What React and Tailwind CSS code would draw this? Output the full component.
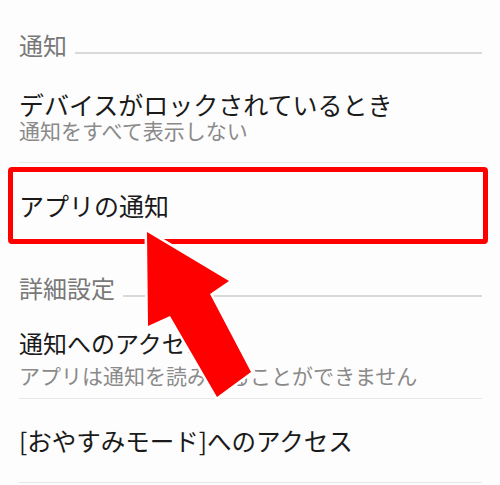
export default function App() {
  const font = { fontFamily: '"Noto Sans CJK JP", "Noto Sans", sans-serif' };
  return (
    <div className="relative w-[500px] h-[485px] overflow-hidden bg-[#fdfdfd]" style={font}>
      <div className="flex flex-col pt-[33px]">
        {/* Header 通知 */}
        <div className="flex items-end pl-[19px] pr-[18px] h-[24px]">
          <span className="text-[24px] leading-[24px] text-[#787878]">通知</span>
          <div className="flex-1 h-[2px] bg-[#d9d9d9] ml-[8px] mb-[3px]" />
        </div>

        {/* Item 1 */}
        <div className="flex flex-col pl-[19px] mt-[35px]">
          <span className="text-[25px] leading-[25px] text-[#1a1a1a]">デバイスがロックされているとき</span>
          <span className="text-[21px] leading-[21px] text-[#8a8a8a] mt-[3px]">通知をすべて表示しない</span>
        </div>
        <div className="h-[1px] bg-[#e8e8e8] ml-[19px] mr-[18px] mt-[21px]" />

        {/* Highlighted item */}
        <div className="mt-[4px] ml-[8px] mr-[12px] h-[77px] border-[5px] border-[#ff0000] rounded-[4px] flex items-center pl-[6px]">
          <span className="text-[25px] leading-[25px] text-[#1a1a1a]">アプリの通知</span>
        </div>

        {/* Header 詳細設定 */}
        <div className="flex items-end pl-[19px] pr-[18px] h-[24px] mt-[32px]">
          <span className="text-[24px] leading-[24px] text-[#787878]">詳細設定</span>
          <div className="flex-1 h-[2px] bg-[#d9d9d9] ml-[8px] mb-[3px]" />
        </div>

        {/* Item 2 */}
        <div className="flex flex-col pl-[19px] mt-[31px]">
          <span className="text-[24px] leading-[24px] text-[#1a1a1a]">通知へのアクセス</span>
          <span className="text-[21px] leading-[21px] text-[#8a8a8a] mt-[10px]">アプリは通知を読み取ることができません</span>
        </div>
        <div className="h-[1px] bg-[#e8e8e8] ml-[19px] mr-[18px] mt-[12px]" />

        {/* Item 3 */}
        <div className="flex flex-col pl-[19px] mt-[30px]">
          <span className="text-[24.5px] leading-[24px] text-[#1a1a1a]">[おやすみモード]へのアクセス</span>
        </div>
        <div className="h-[1px] bg-[#e8e8e8] ml-[19px] mr-[18px] mt-[29px]" />
      </div>

      {/* Annotation arrow */}
      <svg className="absolute inset-0 pointer-events-none" width="500" height="485" viewBox="0 0 500 485">
        <polygon
          points="147,232 229,281 210,294 251,372 217,397 170,316 148,326"
          fill="#ff0000"
          stroke="#ffffff"
          strokeWidth="5"
          strokeLinejoin="miter"
          style={{ paintOrder: "stroke" }}
        />
      </svg>
    </div>
  );
}
